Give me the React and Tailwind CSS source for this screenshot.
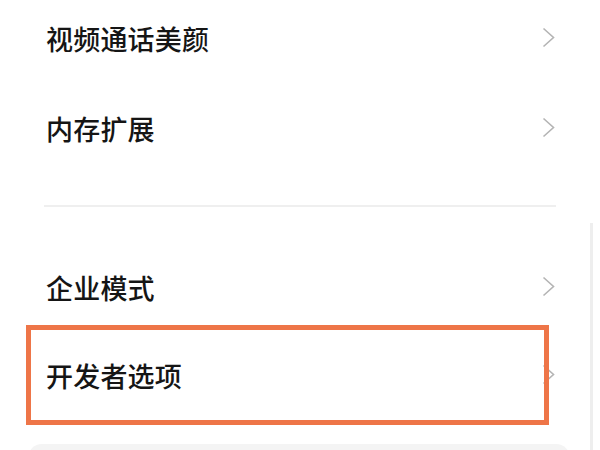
import React from 'react'

const Chevron = () => (
  <svg width="13" height="21" viewBox="0 0 13 21" fill="none" className="shrink-0">
    <polyline points="1.5,1.5 11.5,10.5 1.5,19.5" stroke="#b4b4b4" strokeWidth="1.6" strokeLinejoin="miter" />
  </svg>
)

function Row({ label, className = 'h-[90px]' }) {
  return (
    <div className={`flex items-center justify-between pl-[18px] pr-[17px] ${className}`}>
      <span className="text-[27px] font-medium leading-none tracking-[0.2px] text-[#151515]">{label}</span>
      <div className="-mt-[2px]">
        <Chevron />
      </div>
    </div>
  )
}

export default function App() {
  return (
    <div
      className="relative h-[450px] w-[600px] overflow-hidden bg-white"
      style={{ fontFamily: '"Noto Sans CJK SC", "Noto Sans", sans-serif' }}
    >
      <div className="flex flex-col px-[28px] -mt-[7px]">
        <Row label="视频通话美颜" />
        <Row label="内存扩展" />
        <div className="mx-[16px] mt-[32px] h-[2px] bg-[#efefef]" />
        <div className="h-[36px]" />
        <Row label="企业模式" className="h-[88px]" />
        <Row label="开发者选项" className="h-[88px]" />
        <div className="mt-[25px] h-[20px] rounded-t-[14px] bg-[#f4f4f4] mr-[2px]" />
      </div>

      {/* scroll edge */}
      <div className="absolute right-[7px] top-[223px] bottom-0 w-[3px] bg-[#eeeeee]" />

      {/* highlight box */}
      <div className="absolute left-[26px] top-[325px] h-[100px] w-[523px] border-[5px] border-[#ee7548]" />
    </div>
  )
}
